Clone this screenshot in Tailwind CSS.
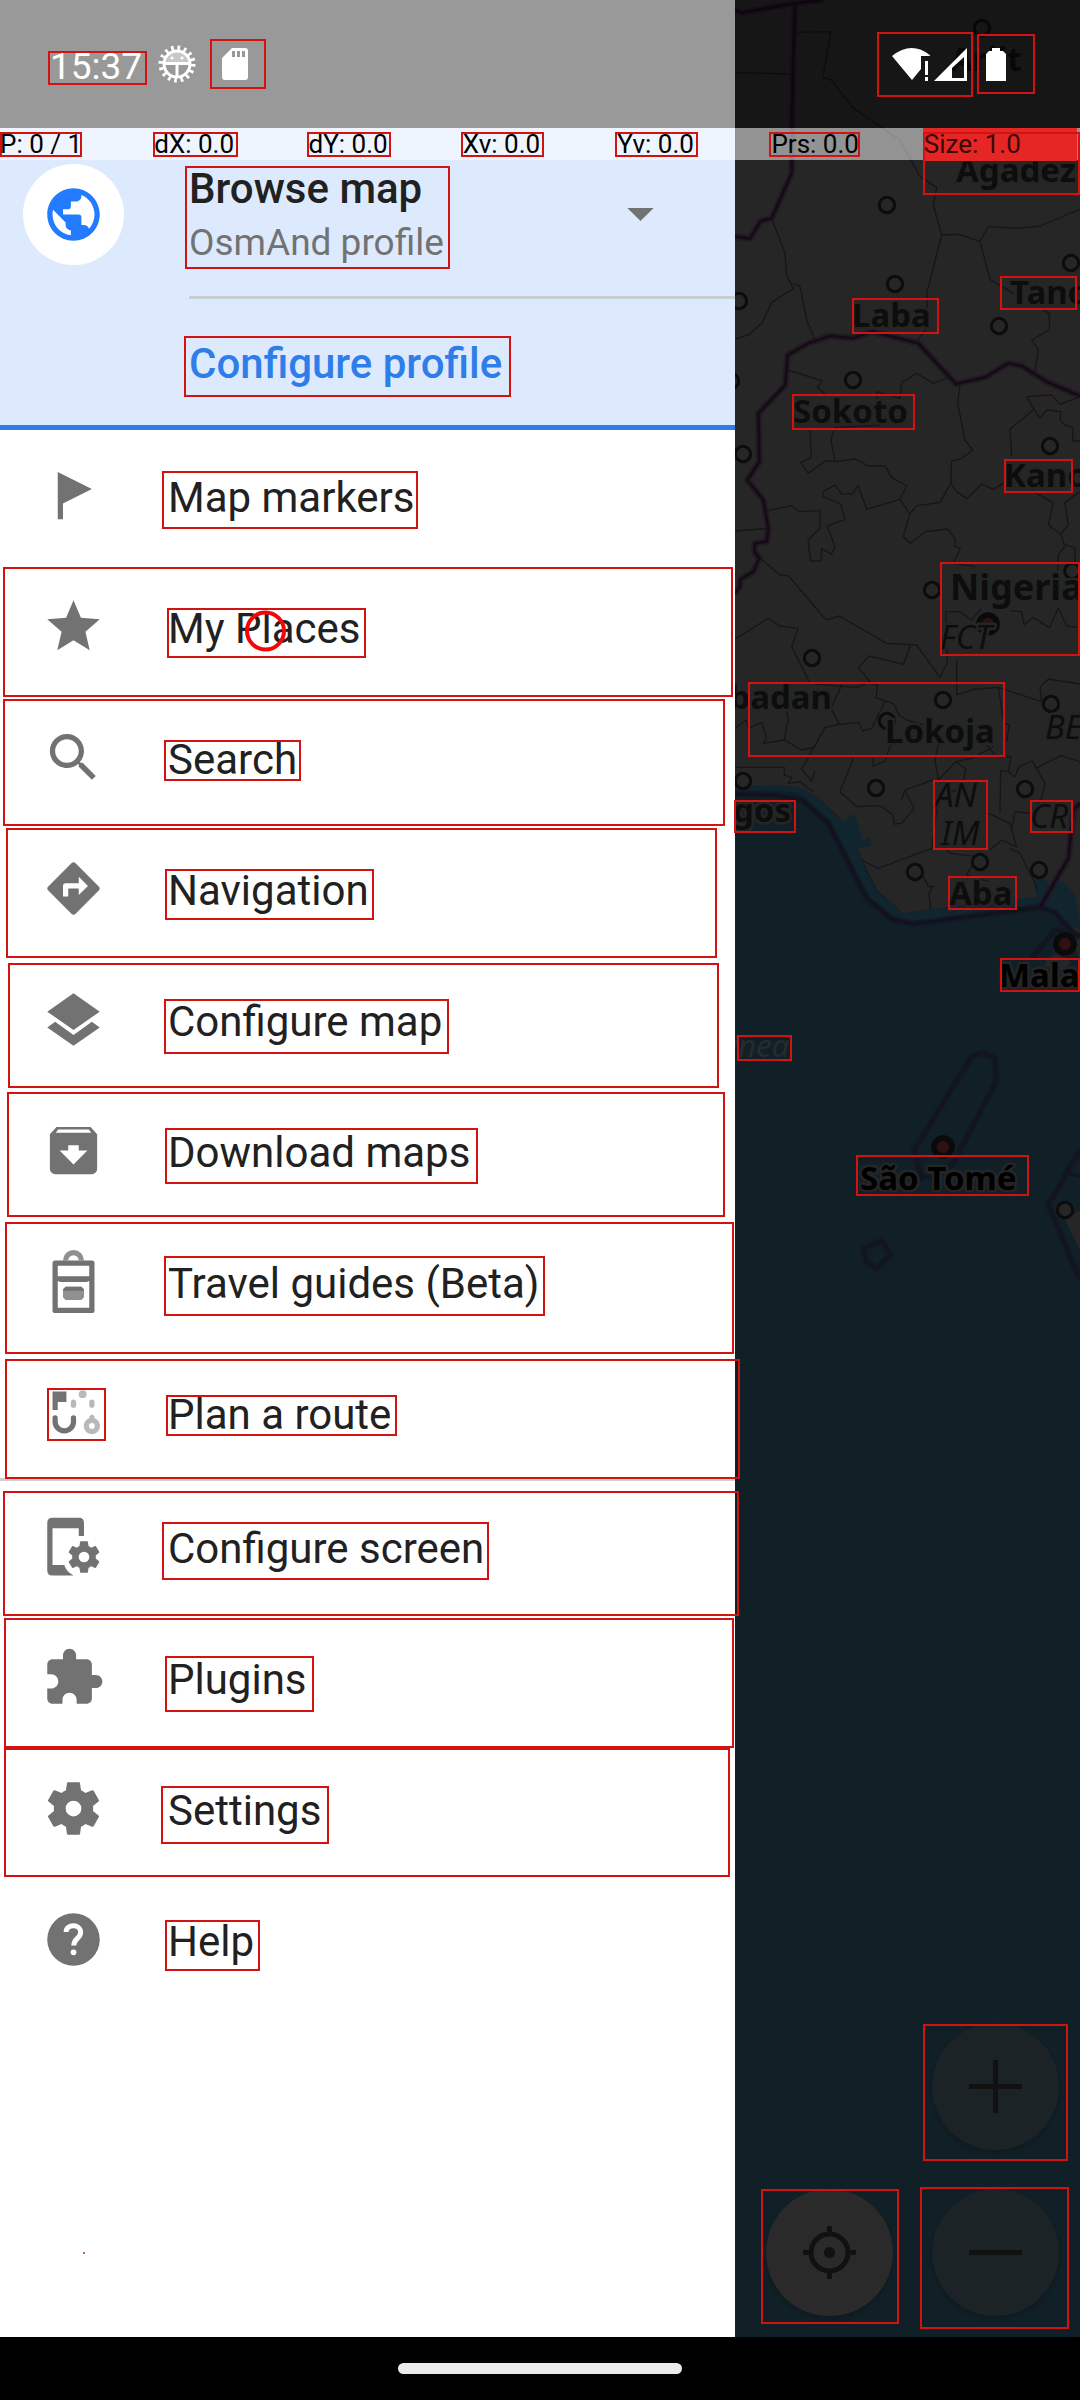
<!DOCTYPE html>
<html lang="en">
<head>
<meta charset="utf-8">
<meta name="viewport" content="width=device-width, initial-scale=1">
<title>OsmAnd menu</title>
<script src="https://cdn.jsdelivr.net/npm/@tailwindcss/browser@4"></script>
</head>
<body class="relative flex min-h-screen flex-col overflow-x-hidden bg-black font-[Roboto,sans-serif] text-[#212121]">

<main class="relative flex flex-1 bg-[#111f26]">
  <aside class="relative z-10 flex w-[735px] shrink-0 flex-col bg-white pt-32">
    <header class="border-b-5 border-[#2f7de9] bg-[#ddeafd] pt-8">
      <div class="flex items-center pl-[23px]">
        <span class="flex size-[101px] shrink-0 items-center justify-center rounded-full bg-white">
          <svg class="size-[63px] fill-[#237bff]" viewBox="0 0 24 24"><path d="M12 2C6.48 2 2 6.48 2 12s4.48 10 10 10 10-4.48 10-10S17.52 2 12 2zm-1 17.93c-3.95-.49-7-3.85-7-7.93 0-.62.08-1.21.21-1.79L9 15v1c0 1.1.9 2 2 2v1.93zm6.9-2.54c-.26-.81-1-1.39-1.9-1.39h-1v-3c0-.55-.45-1-1-1H8v-2h2c.55 0 1-.45 1-1V7h2c1.1 0 2-.9 2-2v-.41c2.93 1.19 5 4.06 5 7.41 0 2.080-.8 3.970-2.100 5.390z"/></svg>
        </span>
        <div class="ml-[65px] flex-1">
          <h1 class="text-[42px] leading-[58px] font-medium">Browse map</h1>
          <p class="text-[37px] leading-[50px] text-[#727272]">OsmAnd profile</p>
        </div>
        <button class="mr-[63px]" aria-label="Switch profile">
          <svg class="size-[63px] fill-[#727272]" viewBox="0 0 24 24"><path d="M7 9.500h10l-5 5z"/></svg>
        </button>
      </div>
      <div class="mt-7 ml-[189px] h-[3px] bg-[#c8ccd3]"></div>
      <button class="block h-[126px] w-full pt-[3px] pl-[189px] text-left text-[42px] font-medium text-[#2f7de9]">Configure profile</button>
    </header>

    <nav class="flex flex-col text-[42px]">
      <a href="#markers" class="flex h-[131px] items-center gap-[63px] px-[42px]">
        <svg class="size-[63px] shrink-0 fill-[#727272]" viewBox="0 0 24 24"><path d="M6 3l13 6.500L8 15v6H6z"/></svg>
        <span class="pt-[3px]">Map markers</span></a>
      <a href="#places" class="flex h-[131px] items-center gap-[63px] px-[42px]">
        <svg class="size-[63px] shrink-0 fill-[#727272]" viewBox="0 0 24 24"><path d="M12 17.270L18.180 21l-1.640-7.030L22 9.240l-7.190-.61L12 2 9.190 8.630 2 9.240l5.460 4.730L5.820 21z"/></svg>
        <span class="pt-[3px]">My Places</span></a>
      <a href="#search" class="flex h-[131px] items-center gap-[63px] px-[42px]">
        <svg class="size-[63px] shrink-0 fill-[#727272]" viewBox="0 0 24 24"><path d="M15.500 14h-.79l-.28-.27C15.410 12.590 16 11.110 16 9.500 16 5.910 13.090 3 9.500 3S3 5.910 3 9.500 5.910 16 9.500 16c1.610 0 3.090-.59 4.230-1.570l.27.28v.79l5 4.990L20.490 19l-4.990-5zm-6 0C7.010 14 5 11.990 5 9.500S7.010 5 9.500 5 14 7.010 14 9.500 11.990 14 9.500 14z"/></svg>
        <span class="pt-[3px]">Search</span></a>
      <a href="#navigation" class="flex h-[131px] items-center gap-[63px] px-[42px]">
        <svg class="size-[63px] shrink-0 fill-[#727272]" viewBox="0 0 24 24"><path d="M21.710 11.290l-9-9c-.39-.39-1.020-.39-1.410 0l-9 9c-.39.39-.39 1.020 0 1.410l9 9c.39.39 1.020.39 1.410 0l9-9c.39-.38.39-1.010 0-1.410zM14 14.500V12h-4v3H8v-4c0-.55.45-1 1-1h5V7.500l3.500 3.500-3.500 3.500z"/></svg>
        <span class="pt-[3px]">Navigation</span></a>
      <a href="#map" class="flex h-[131px] items-center gap-[63px] px-[42px]">
        <svg class="size-[63px] shrink-0 fill-[#727272]" viewBox="0 0 24 24"><path d="M12 2l10 7-10 7L2 9zM5 12.900l7 5 7-5 3 2.100-10 7-10-7z"/></svg>
        <span class="pt-[3px]">Configure map</span></a>
      <a href="#download" class="flex h-[131px] items-center gap-[63px] px-[42px]">
        <svg class="size-[63px] shrink-0 fill-[#727272]" viewBox="0 0 24 24" fill-rule="evenodd"><path d="M5.500 3h13L21 5.800V19a2 2 0 0 1-2 2H5a2 2 0 0 1-2-2V5.800zM5.200 5.200h13.600l-1-1.200H6.200zM10 10v2H6.700l5.300 5.300 5.300-5.300H14v-2z"/></svg>
        <span class="pt-[3px]">Download maps</span></a>
      <a href="#travel" class="flex h-[131px] items-center gap-[63px] px-[42px]">
        <svg class="size-[63px] shrink-0 fill-[#727272]" viewBox="0 0 24 24" fill-rule="evenodd"><path class="fill-[#909090]" d="M8 4a4 4 0 0 1 8 0h-2a2 2 0 0 0-4 0zM9 14h6l1 1v3l-1 1H9l-1-1v-3z"/><path d="M5 4h14q1 0 1 1v18q0 1-1 1H5q-1 0-1-1V5q0-1 1-1zM6 6v4h12V6zM6 11.800v10.200h12V11.800l-1 .4H7zM9 14h6l1 1v.5H8V15z"/></svg>
        <span class="pt-[3px]">Travel guides (Beta)</span></a>
      <a href="#route" class="flex h-[131px] items-center gap-[63px] px-[42px]">
        <svg class="size-[63px] shrink-0 fill-[#727272]" viewBox="0 0 24 24"><path d="M4 4h5.300v4H6v3H4z"/><path d="M5 14v1.500a3.500 3.500 0 0 0 7 0V14" class="fill-none stroke-[#727272]" stroke-width="2" stroke-linecap="round"/><g class="fill-[#b9b9b9]"><circle cx="15.500" cy="5" r="1.500"/><rect x="11" y="7" width="2" height="3.200" rx="1"/><rect x="18" y="7" width="2" height="3.200" rx="1"/><path fill-rule="evenodd" d="M18 13.500q1-1.500 2 0v.7a3.100 3.100 0 1 1-2 0zM19 16a1.100 1.100 0 1 0 0 2.200 1.100 1.100 0 0 0 0-2.200z"/></g></svg>
        <span class="pt-[3px]">Plan a route</span></a>
      <div class="h-[3px] bg-[#d0d0d0]"></div>
      <a href="#screen" class="flex h-[131px] items-center gap-[63px] px-[42px]">
        <svg class="size-[63px] shrink-0 fill-[#727272]" viewBox="0 0 24 24"><path d="M4 1h10q2 0 2 2v5h-2V5H4v14h4.500q.7 2.500 3.500 4H4q-2 0-2-2V3q0-2 2-2z"/><path transform="translate(8.800 8.800) scale(.6)" d="M19.430 12.980c.04-.32.07-.64.07-.98s-.03-.66-.07-.98l2.110-1.650c.19-.15.24-.42.12-.64l-2-3.460c-.12-.22-.39-.3-.61-.22l-2.490 1c-.52-.4-1.080-.73-1.690-.98l-.38-2.650C14.460 2.180 14.250 2 14 2h-4c-.25 0-.46.18-.49.42l-.38 2.650c-.61.25-1.170.59-1.690.98l-2.490-1c-.23-.09-.49 0-.61.22l-2 3.460c-.13.22-.07.49.12.64l2.110 1.650c-.04.32-.07.65-.07.98s.03.66.07.98l-2.110 1.650c-.19.15-.24.42-.12.64l2 3.460c.12.22.39.3.61.22l2.490-1c.52.4 1.080.73 1.690.98l.38 2.650c.03.24.24.42.49.42h4c.25 0 .46-.18.49-.42l.38-2.650c.61-.25 1.170-.59 1.690-.98l2.490 1c.23.09.49 0 .61-.22l2-3.460c.12-.22.07-.49-.12-.64zM12 15.400a3.400 3.400 0 1 1 0-6.800 3.400 3.400 0 0 1 0 6.800z"/></svg>
        <span class="pt-[3px]">Configure screen</span></a>
      <a href="#plugins" class="flex h-[131px] items-center gap-[63px] px-[42px]">
        <svg class="size-[63px] shrink-0 fill-[#727272]" viewBox="0 0 24 24"><path d="M20.500 11H19V7c0-1.100-.9-2-2-2h-4V3.500C13 2.120 11.880 1 10.500 1S8 2.120 8 3.500V5H4c-1.100 0-1.990.9-1.990 2v3.800H3.500c1.490 0 2.700 1.210 2.700 2.700s-1.210 2.700-2.700 2.700H2V20c0 1.100.9 2 2 2h3.800v-1.500c0-1.490 1.210-2.700 2.700-2.700 1.490 0 2.700 1.210 2.700 2.700V22H17c1.100 0 2-.9 2-2v-4h1.500c1.380 0 2.500-1.120 2.500-2.500S21.880 11 20.500 11z"/></svg>
        <span class="pt-[3px]">Plugins</span></a>
      <a href="#settings" class="flex h-[131px] items-center gap-[63px] px-[42px]">
        <svg class="size-[63px] shrink-0 fill-[#727272]" viewBox="0 0 24 24"><path d="M19.430 12.980c.04-.32.07-.64.07-.98s-.03-.66-.07-.98l2.110-1.650c.19-.15.24-.42.12-.64l-2-3.460c-.12-.22-.39-.3-.61-.22l-2.490 1c-.52-.4-1.080-.73-1.690-.98l-.38-2.650C14.460 2.180 14.250 2 14 2h-4c-.25 0-.46.18-.49.42l-.38 2.650c-.61.25-1.170.59-1.690.98l-2.490-1c-.23-.09-.49 0-.61.22l-2 3.460c-.13.22-.07.49.12.64l2.110 1.650c-.04.32-.07.65-.07.98s.03.66.07.98l-2.110 1.650c-.19.15-.24.42-.12.64l2 3.460c.12.22.39.3.61.22l2.490-1c.52.4 1.080.73 1.690.98l.38 2.650c.03.24.24.42.49.42h4c.25 0 .46-.18.49-.42l.38-2.650c.61-.25 1.170-.59 1.690-.98l2.490 1c.23.09.49 0 .61-.22l2-3.460c.12-.22.07-.49-.12-.64zM12 15a3 3 0 1 1 0-6 3 3 0 0 1 0 6z"/></svg>
        <span class="pt-[3px]">Settings</span></a>
      <a href="#help" class="flex h-[131px] items-center gap-[63px] px-[42px]">
        <svg class="size-[63px] shrink-0 fill-[#727272]" viewBox="0 0 24 24"><circle cx="12" cy="12" r="10"/><path d="M9.200 9.100C9.200 6 14.700 6 14.700 9.300c0 2.300-2.600 2.300-2.600 5" class="fill-none stroke-white" stroke-width="1.900"/><circle cx="12" cy="16.900" r="1.100" class="fill-white"/></svg>
        <span class="pt-[3px]">Help</span></a>
    </nav>
  </aside>

  <section class="relative min-w-0 flex-1 overflow-hidden" aria-label="Map">
    <svg class="absolute top-0 left-0" width="345" height="2337" viewBox="735 0 345 2337">
      <path fill="#262626" d="M735 0H1080V960L1060 905 1037 893 1031 880 1040 897 903 913 877 890 858 850 837 815 816 796 800 788 776 785 735 785z"/>
      <path fill="#11252f" d="M735 785L776 785 800 788 816 796 837 817 843 821 855 814 863 841 870 837 871 846 858 848 865 870 877 892 903 913 1000 900 1037 897 1033 880 1045 878 1050 888 1062 880 1075 895 1080 920V930L1060 918 1040 910 903 922 875 910 860 885 825 815 800 793 775 790 735 790z"/>
      <path fill="#262626" d="M1065 1220l15-10v40zM1046 960l10-6 15 8-7 8-19-4z"/>
      <g transform="translate(720 0) scale(.33333)" fill="none" stroke-linejoin="round">
        <g stroke="#20121f" stroke-width="20" opacity=".6">
          <path d="M45 30L65 38 225 10 310 0M225 10L218 240 215 520 155 655 122 663 90 716 45 710M1080 1188L980 1145 905 1098 865 1090 795 1132 708 1152 595 1030 455 995 400 1015 330 1008 265 1030 203 1065 196 1155 115 1240 118 1385 82 1440 130 1500 145 1585 140 1625 105 1630 103 1655 118 1675 100 1715 60 1740 60 1760 45 1780M960 2722L1045 2575 1060 2430 1080 2410"/>
        </g>
        <g stroke="#12182200" stroke-width="20"><path stroke="#121924" d="M45 2382L160 2385 245 2400 325 2470 440 2695 515 2758 580 2772 960 2722M960 2722L1005 2738 1060 2800 1080 2810M935 2875L1005 2790 1060 2800M582 3450L755 3170 788 3158 825 3175 828 3245 700 3490 605 3535zM430 3745L485 3722 510 3765 470 3805 438 3785zM1080 3450L985 3615 1080 3840"/></g>
        <g stroke="#170a18" stroke-width="8">
          <path d="M45 30L65 38 225 10 310 0M225 10L218 240 215 520 155 655 122 663 90 716 45 710M1080 1188L980 1145 905 1098 865 1090 795 1132 708 1152 595 1030 455 995 400 1015 330 1008 265 1030 203 1065 196 1155 115 1240 118 1385 82 1440 130 1500 145 1585 140 1625 105 1630 103 1655 118 1675 100 1715 60 1740 60 1760 45 1780M960 2722L1045 2575 1060 2430 1080 2410"/>
          <path stroke="#12111e" d="M45 2382L160 2385 245 2400 325 2470 440 2695 515 2758 580 2772 960 2722 1005 2738 1060 2800 1080 2810"/>
        </g>
        <g stroke="#1b131c" stroke-width="4">
          <path d="M45 218L218 222M225 97L333 95 308 232 334 240 398 323 540 420 600 530 650 562 640 615 665 705 620 880 625 980 585 1030M665 705L720 703 780 725 810 838 880 880M780 725L805 680 890 685 960 678 1080 628M155 655L195 760 200 825 220 865 155 907 127 968 88 1003 45 1018M220 850L240 860 260 960 285 1020M960 925L988 940 988 990 935 1020 955 1050 945 1115M203 1110L306 1142 292 1162 318 1185M470 1210L470 1175 540 1195 545 1148 590 1120 640 1150 690 1130M720 1155L713 1210 735 1320 758 1350 725 1375 695 1385 692 1450 660 1507 592 1517 570 1540 550 1610 570 1630 615 1595 682 1587 705 1615 705 1640 722 1645 700 1690 765 1700M692 1450L710 1475 740 1496 785 1452 820 1468 850 1450M920 1190L995 1185 1020 1213 1080 1190M920 1190L942 1228 870 1288 875 1370M942 1228L960 1255 980 1230 1022 1235 1020 1260 1035 1275 1058 1283V1323H1080"/>
          <g transform="translate(0 1200)">
            <path d="M270 85L274 172 242 188 265 220 318 182 345 185 408 177 445 198 495 197 515 232 560 258 540 298 440 328 414 255 398 282 365 282 345 255 310 275 308 290 362 312 375 358 322 378 345 440 334 463 305 445 303 482 272 484 264 420 300 385V332L237 335 215 317 137 333M345 185L333 120 345 82 490 75M540 298L570 343M45 393L148 385M118 473L180 525 205 527 318 660 358 648 500 730 590 735 660 832 682 787 677 635 718 635 755 660 785 625M45 718L145 655 180 678 235 686 215 740 270 850 410 863 450 845 415 803 447 768 550 793 572 735M710 780V885L760 868 835 862 965 905 960 862 985 837 1080 852M870 632L905 635 912 675 940 652 988 683 1015 625 1040 678 1080 682M940 275L1000 308 985 375 1022 402 1045 375 1035 308 1080 275M1022 402L1032 432 1065 445V490M1040 432L1015 465 1012 520"/>
            <path d="M450 850L473 855 468 893 522 912 537 945 560 960 610 975M365 855L333 925 358 973 315 983 245 1107 275 1145 285 1112M358 973L415 967 428 993 455 985 495 905M45 985L78 960 85 985 125 967 140 1015 130 1030 193 1020 205 955 193 905M193 1020L245 1050 290 1040M45 1102H193V1125L215 1132 205 1150 240 1145 280 1175M400 1075L360 1175 410 1220 480 1217 520 1245 522 1272 545 1270 582 1225 555 1170 640 1140M512 1035L495 1083 460 1098 458 1072M655 1035L645 1080 655 1140M800 1035L830 1070H873L865 1115 842 1112 840 1240M835 862L852 970 868 975 860 1025M655 1140L708 1085 755 1075 820 1040M865 1115L885 1130 897 1100 937 1083 975 1150 965 1195 930 1240 885 1235 875 1290M948 1105L1022 1067 1080 1085M708 1085L738 1108 725 1160 655 1200 635 1345 475 1405 425 1380M555 1170L545 1200M610 1430L625 1460 640 1460 627 1480 632 1530M680 1350L690 1360 770 1370 740 1425 805 1445M805 1240L870 1270 890 1340 845 1320 810 1350M870 1345L900 1360 955 1470"/>
          </g>
          <g stroke-width="8" stroke="#131420"><path d="M935 2875L1005 2790 1060 2800M582 3450L755 3170 788 3158 825 3175 828 3245 700 3490M582 3450L605 3535 640 3530M430 3745L485 3722 510 3765 470 3805 438 3785zM1080 3450L985 3615 1080 3840M1040 3520L1080 3530"/></g>
        </g>
        <g fill="#262626" stroke="#0c0c0c" stroke-width="9">
          <circle cx="786" cy="84" r="23"/><circle cx="501" cy="615" r="23"/><circle cx="525" cy="852" r="23"/><circle cx="1053" cy="789" r="23"/><circle cx="837" cy="978" r="23"/><circle cx="57" cy="903" r="23"/><circle cx="33" cy="1143" r="23"/><circle cx="399" cy="1140" r="23"/>
          <circle cx="69" cy="1362" r="23"/><circle cx="990" cy="1338" r="23"/><circle cx="636" cy="1770" r="23"/><circle cx="1057" cy="1713" r="23"/><circle cx="276" cy="1974" r="23"/><circle cx="669" cy="2100" r="23"/><circle cx="501" cy="2163" r="23"/><circle cx="993" cy="2112" r="23"/><circle cx="69" cy="2343" r="23"/><circle cx="468" cy="2364" r="23"/><circle cx="915" cy="2367" r="23"/>
          <circle cx="585" cy="2616" r="23"/><circle cx="780" cy="2586" r="23"/><circle cx="957" cy="2610" r="23"/><circle cx="1035" cy="3630" r="23"/>
        </g>
        <g fill="#301111" stroke="#0a0a0a" stroke-width="17"><circle cx="804" cy="1872" r="27"/><circle cx="1035" cy="2832" r="27"/><circle cx="669" cy="3441" r="27"/></g>
      </g>
      <g class="font-['Noto_Sans',sans-serif] text-[33px] font-bold" fill="#0d0d0d" stroke="#242626" stroke-width="5" paint-order="stroke" stroke-linejoin="round">
        <text x="950" y="71">Arlit</text>
        <text x="956" y="182">Agadez</text>
        <text x="1010" y="304">Tanout</text>
        <text x="852" y="327">Laba</text>
        <text x="793" y="423">Sokoto</text>
        <text x="1004" y="487">Kano</text>
        <text x="950" y="600" class="text-[36px]">Nigeria</text>
        <text x="832" y="709" text-anchor="end">Ibadan</text>
        <text x="885" y="743">Lokoja</text>
        <text x="791" y="822" text-anchor="end">Lagos</text>
        <text x="949" y="905">Aba</text>
        <g fill="#000"><text x="999" y="987">Malabo</text><text x="860" y="1190">São Tomé</text></g>
        <g class="font-normal italic"><text x="940" y="649">FCT</text><text x="1045" y="739">BE</text><text x="935" y="807">AN</text><text x="941" y="845">IM</text><text x="1030" y="828">CR</text>
        <text x="789" y="1057" text-anchor="end" class="text-[31px]" fill="#262b2c" stroke="none">Guinea</text></g>
      </g>
    </svg>
    <div class="absolute right-[21px] bottom-[21px] grid grid-cols-2 gap-[39px]">
      <button class="col-start-2 flex size-[127px] items-center justify-center rounded-full bg-[#1c2326] shadow-md" aria-label="Zoom in"><svg class="size-[63px] fill-[#111]" viewBox="0 0 63 63"><path d="M5 29h53v5H5zM29 5h5v53h-5z"/></svg></button>
      <button class="col-start-1 flex size-[127px] items-center justify-center rounded-full bg-[#2a2a2a] shadow-md" aria-label="My location"><svg class="size-[63px] fill-none stroke-[#111]" viewBox="0 0 63 63" stroke-width="5"><circle cx="31.500" cy="31.500" r="18.500"/><path d="M31.500 5v8M31.500 50v8M5 31.500h8M50 31.500h8"/><circle cx="31.500" cy="31.500" r="5.500" class="fill-[#111] stroke-none"/></svg></button>
      <button class="flex size-[127px] items-center justify-center rounded-full bg-[#1c2326] shadow-md" aria-label="Zoom out"><svg class="size-[63px] fill-[#111]" viewBox="0 0 63 63"><path d="M5 29h53v5H5z"/></svg></button>
    </div>
  </section>
</main>

<footer class="flex h-[63px] items-center justify-center bg-black">
  <div class="h-[11px] w-[284px] rounded-full bg-[#ebebeb]"></div>
</footer>

<!-- System status bar -->
<div class="absolute inset-x-0 top-0 z-20 flex h-32 items-center bg-black/40 pr-[74px] pl-[50px] text-white">
  <time class="pt-[5px] text-[37px] leading-[44px]">15:37</time>
  <svg class="ml-4 size-[38px]" viewBox="0 0 38 38" fill="none" stroke="#fff"><circle cx="19" cy="19" r="16" stroke-width="5" stroke-dasharray="2.600 3.683"/><circle cx="19" cy="19" r="13" stroke-width="3"/><path d="M8 17a11 11 0 0 1 22 0z" fill="#fff" fill-opacity=".45" stroke="none"/><path d="M6 18.500h26M19 19v12" stroke-width="3"/><circle cx="14" cy="13" r="1.500" fill="#fff" stroke="none"/><circle cx="24" cy="13" r="1.500" fill="#fff" stroke="none"/></svg>
  <svg class="ml-[26px] h-8 w-[26px]" viewBox="0 0 26 32"><path fill="#fff" fill-rule="evenodd" d="M10 0h13q3 0 3 3v26q0 3-3 3H3q-3 0-3-3V10zM10 3v6h3V3zM15 3v6h3V3zM20 3v6h3V3z"/></svg>
  <span class="flex-1"></span>
  <svg class="h-[33px] w-[38px]" viewBox="0 0 38 33" fill="#fff"><path d="M0 8Q20-8 39 8H29V21L20 32zM33 13h3v14h-3zM33 29h3v4h-3z"/></svg>
  <svg class="ml-1 size-[33px]" viewBox="0 0 33 33" fill="#fff"><path fill-rule="evenodd" d="M33 0v33H0zM30 9L18 20v10h12z"/></svg>
  <svg class="ml-[19px] h-[33px] w-[20px]" viewBox="0 0 20 33" fill="#fff"><path d="M6 0h8v3h3l3 3v27H0V6l3-3h3z"/></svg>
</div>

<!-- Pointer location read-out -->
<div class="absolute inset-x-0 top-32 z-20 grid h-8 grid-cols-7 bg-white/50 text-[26px] leading-[33px] text-black">
  <span>P: 0 / 1</span><span>dX: 0.0</span><span>dY: 0.0</span><span>Xv: 0.0</span><span>Yv: 0.0</span><span>Prs: 0.0</span><span class="mr-[3px] -ml-[3px] bg-[#e62525] pl-px text-[#3a0808]">Size: 1.0</span>
</div>

<!-- Detected element outlines and touch marker -->
<svg class="pointer-events-none absolute top-0 left-0 z-30" width="1080" height="2400" viewBox="0 0 1080 2400" fill="none" stroke="#d31212" stroke-width="2">
  <path d="M49 52h97v32H49zM211 40h54v48h-54zM1 133h80v23H1zM154 133h83v23h-83zM308 133h82v23h-82zM462 133h81v23h-81zM616 133h81v23h-81zM770 133h89v23h-89zM186 167h263v101H186zM185 337h325v59H185z"/>
  <path d="M878 33h94v63h-94zM978 35h56v58h-56zM924 133h155v61H924zM853 299h85v34h-85zM1001 277h75v32h-75zM793 395h121v34H793zM1005 460h67v32h-67zM941 563h138v92H941zM749 683h255v73H749zM934 781h53v68h-53zM1031 801h41v31h-41zM735 801h60v31h-60zM949 877h67v32h-67zM1001 959h78v32h-78zM738 1036h53v24h-53zM857 1156h171v39H857z"/>
  <path d="M163 472h254v56H163zM4 568h728v128H4zM168 609h197v48H168zM4 700h720v125H4zM165 741h135v39H165zM7 829h709v128H7zM166 870h207v49H166zM9 964h709v123H9zM165 1000h283v53H165zM8 1093h716v123H8zM166 1129h311v54H166z"/>
  <path d="M6 1223h727v130H6zM165 1257h379v58H165zM6 1360h733v118H6zM48 1389h57v51H48zM167 1396h229v39H167zM4 1492h734v123H4zM163 1523h325v56H163zM5 1619h728v128H5zM166 1657h147v54H166zM5 1749h724v127H5zM162 1787h166v56H162zM166 1921h93v49H166z"/>
  <path d="M924 2025h143v135H924zM762 2190h136v133H762zM921 2188h147v140H921z"/>
  <circle cx="265.500" cy="631" r="18.500" stroke="#f50505" stroke-width="4"/>
  <circle cx="84" cy="2253" r="1" fill="#a33" stroke="none"/>
</svg>
</body>
</html>
